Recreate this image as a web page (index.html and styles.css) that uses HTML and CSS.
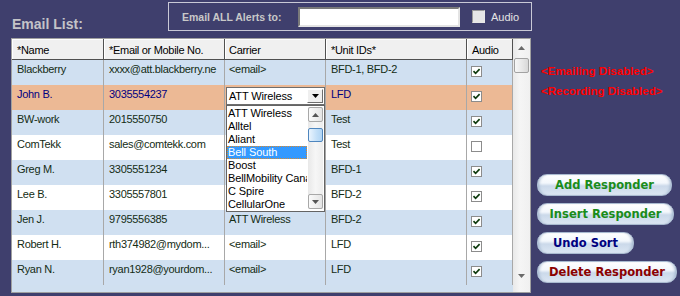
FILE: index.html
```html
<!DOCTYPE html>
<html>
<head>
<meta charset="utf-8">
<link rel="stylesheet" href="styles.css">
</head>
<body>
<div class="page">
  <div class="top">
    <div class="list-title">Email List:</div>
    <div class="alert-box">
      <span class="alert-label">Email ALL Alerts to:</span>
      <span class="alert-input"></span>
      <span class="cb-top"></span>
      <span class="alert-audio">Audio</span>
    </div>
  </div>
  <div class="main">
    <div class="frame">
      <div class="grid">
        <div class="row head">
          <div class="c c1">*Name</div>
          <div class="c c2">*Email or Mobile No.</div>
          <div class="c c3">Carrier</div>
          <div class="c c4">*Unit IDs*</div>
          <div class="c c5">Audio</div>
        </div>
        <div class="row alt">
          <div class="c c1">Blackberry</div>
          <div class="c c2">xxxx@att.blackberry.ne</div>
          <div class="c c3">&lt;email&gt;</div>
          <div class="c c4">BFD-1, BFD-2</div>
          <div class="c c5 ca"><span class="cb on"><svg viewBox="0 0 9 9"><path d="M1.5 4.2 L3.6 6.3 L7.6 2.2"/></svg></span></div>
        </div>
        <div class="row sel">
          <div class="c c1">John B.</div>
          <div class="c c2">3035554237</div>
          <div class="c c3 cc">
            <div class="combo">ATT Wireless<span class="combo-btn"><svg viewBox="0 0 7 4"><path d="M0 0 H7 L3.5 4 Z"/></svg></span></div>
          </div>
          <div class="c c4">LFD</div>
          <div class="c c5 ca"><span class="cb on"><svg viewBox="0 0 9 9"><path d="M1.5 4.2 L3.6 6.3 L7.6 2.2"/></svg></span></div>
        </div>
        <div class="row alt">
          <div class="c c1">BW-work</div>
          <div class="c c2">2015550750</div>
          <div class="c c3"></div>
          <div class="c c4">Test</div>
          <div class="c c5 ca"><span class="cb on"><svg viewBox="0 0 9 9"><path d="M1.5 4.2 L3.6 6.3 L7.6 2.2"/></svg></span></div>
        </div>
        <div class="row">
          <div class="c c1">ComTekk</div>
          <div class="c c2">sales@comtekk.com</div>
          <div class="c c3"></div>
          <div class="c c4">Test</div>
          <div class="c c5 ca"><span class="cb"></span></div>
        </div>
        <div class="row alt">
          <div class="c c1">Greg M.</div>
          <div class="c c2">3305551234</div>
          <div class="c c3"></div>
          <div class="c c4">BFD-1</div>
          <div class="c c5 ca"><span class="cb on"><svg viewBox="0 0 9 9"><path d="M1.5 4.2 L3.6 6.3 L7.6 2.2"/></svg></span></div>
        </div>
        <div class="row">
          <div class="c c1">Lee B.</div>
          <div class="c c2">3305557801</div>
          <div class="c c3"></div>
          <div class="c c4">BFD-2</div>
          <div class="c c5 ca"><span class="cb on"><svg viewBox="0 0 9 9"><path d="M1.5 4.2 L3.6 6.3 L7.6 2.2"/></svg></span></div>
        </div>
        <div class="row alt">
          <div class="c c1">Jen J.</div>
          <div class="c c2">9795556385</div>
          <div class="c c3">ATT Wireless</div>
          <div class="c c4">BFD-2</div>
          <div class="c c5 ca"><span class="cb on"><svg viewBox="0 0 9 9"><path d="M1.5 4.2 L3.6 6.3 L7.6 2.2"/></svg></span></div>
        </div>
        <div class="row">
          <div class="c c1">Robert H.</div>
          <div class="c c2">rth374982@mydom...</div>
          <div class="c c3">&lt;email&gt;</div>
          <div class="c c4">LFD</div>
          <div class="c c5 ca"><span class="cb on"><svg viewBox="0 0 9 9"><path d="M1.5 4.2 L3.6 6.3 L7.6 2.2"/></svg></span></div>
        </div>
        <div class="row alt">
          <div class="c c1">Ryan N.</div>
          <div class="c c2">ryan1928@yourdom...</div>
          <div class="c c3">&lt;email&gt;</div>
          <div class="c c4">LFD</div>
          <div class="c c5 ca"><span class="cb on"><svg viewBox="0 0 9 9"><path d="M1.5 4.2 L3.6 6.3 L7.6 2.2"/></svg></span></div>
        </div>
      </div>
      <div class="vscroll">
        <span class="arrow up"><svg viewBox="0 0 7 4"><path d="M3.5 0 L7 4 H0 Z"/></svg></span>
        <span class="thumb"></span>
        <span class="arrow down"><svg viewBox="0 0 7 4"><path d="M0 0 H7 L3.5 4 Z"/></svg></span>
      </div>
      <div class="droplist">
        <div class="items">
          <div class="it">ATT Wireless</div>
          <div class="it">Alltel</div>
          <div class="it">Aliant</div>
          <div class="it on">Bell South</div>
          <div class="it">Boost</div>
          <div class="it">BellMobility Cana</div>
          <div class="it">C Spire</div>
          <div class="it">CellularOne</div>
        </div>
        <div class="lscroll">
          <span class="lbtn"><svg viewBox="0 0 7 4"><path d="M3.5 0 L7 4 H0 Z"/></svg></span>
          <span class="lthumb"></span>
          <span class="lbtn lbtn-down"><svg viewBox="0 0 7 4"><path d="M0 0 H7 L3.5 4 Z"/></svg></span>
        </div>
      </div>
    </div>
    <div class="side">
      <div class="warn">&lt;Emailing Disabled&gt;</div>
      <div class="warn">&lt;Recording Disabled&gt;</div>
      <div class="buttons">
        <div class="btn btn-add">Add Responder</div>
        <div class="btn btn-insert">Insert Responder</div>
        <div class="btn btn-undo">Undo Sort</div>
        <div class="btn btn-delete">Delete Responder</div>
      </div>
    </div>
  </div>
</div>
</body>
</html>
```

FILE: styles.css
```css
html, body {
  margin: 0;
  padding: 0;
}
body {
  background: #3f3f6d;
  width: 680px;
  height: 296px;
  overflow: hidden;
  font-family: "Liberation Sans", Arial, sans-serif;
}
.top {
  display: flex;
  padding-top: 2px;
  height: 29px;
}
.list-title {
  flex: 0 0 168px;
  box-sizing: border-box;
  padding-left: 12px;
  margin-top: 15px;
  font-size: 14px;
  font-weight: bold;
  line-height: 14px;
  color: #c4c4c8;
}
.alert-box {
  box-sizing: border-box;
  width: 364px;
  height: 29px;
  border: 1px solid #c9c9d6;
  display: flex;
  align-items: center;
  padding-left: 13px;
}
.alert-label {
  flex: 0 0 116px;
  font-size: 10.5px;
  font-weight: bold;
  color: #c8c8c8;
}
.alert-input {
  box-sizing: border-box;
  width: 162px;
  height: 20px;
  background: #fff;
  border: 2px solid;
  border-color: #7a7a7a #e4e4e4 #e4e4e4 #7a7a7a;
}
.cb-top {
  box-sizing: border-box;
  width: 13px;
  height: 13px;
  margin-left: 12px;
  background: #e6e6e6;
  border: 1px solid #9a9a9a;
  border-right-color: #e8e8e8;
  border-bottom-color: #e8e8e8;
}
.alert-audio {
  margin-left: 6px;
  font-size: 11px;
  color: #e4e4e4;
}
.main {
  display: flex;
  margin-top: 7px;
}
.frame {
  position: relative;
  box-sizing: border-box;
  width: 520px;
  height: 255px;
  margin-left: 11px;
  border: 1px solid #a0a0a0;
  display: flex;
  background: #d0e0f0;
}
.grid {
  width: 501px;
}
.row {
  display: flex;
  height: 25px;
  background: #fff;
}
.row.alt {
  background: #d0e0f1;
}
.row.sel {
  background: #ecb995;
}
.row.sel .c {
  color: #000080;
}
.c {
  box-sizing: border-box;
  height: 100%;
  border-right: 1px solid #a8a8a8;
  padding: 3px 0 0 5px;
  white-space: nowrap;
  overflow: hidden;
  font-size: 11px;
  line-height: 13px;
  letter-spacing: -0.3px;
  color: #142c14;
}
.c1 { width: 92px; }
.c2 { width: 121px; }
.c3 { width: 101px; padding-left: 4px; }
.c4 { width: 141px; }
.c5 { width: 46px; }
.row.head {
  height: 21px;
  background: #f0f0f0;
}
.row.head .c {
  color: #000;
  padding-top: 5px;
  border-right: 1px solid #505050;
  border-bottom: 1px solid #505050;
  box-shadow: inset 1px 1px 0 #fff;
}
.ca {
  padding: 6px 0 0 4px;
}
.cb {
  display: block;
  box-sizing: border-box;
  width: 11px;
  height: 11px;
  border: 1px solid #8c8c8c;
  background: #fff;
}
.cb svg {
  display: block;
  width: 9px;
  height: 9px;
}
.cb svg path {
  fill: none;
  stroke: #0d3a0d;
  stroke-width: 1.7;
}
.c.cc {
  padding: 2px 0 0 1px;
  overflow: visible;
}
.combo {
  position: relative;
  box-sizing: border-box;
  width: 99px;
  height: 18px;
  border: 1px solid #6e6e6e;
  background: #fff;
  padding: 1px 0 0 2px;
  color: #000;
  letter-spacing: -0.15px;
  font-size: 11px;
  line-height: 14px;
}
.combo-btn {
  position: absolute;
  right: 1px;
  top: 1px;
  box-sizing: border-box;
  width: 16px;
  height: 14px;
  background: #efefef;
  border: 1px solid;
  border-color: #fff #6e6e6e #6e6e6e #fff;
  display: flex;
  align-items: center;
  justify-content: center;
}
.combo-btn svg {
  width: 7px;
  height: 4px;
  fill: #000;
}
.vscroll {
  width: 17px;
  background: linear-gradient(to right, #e9e9e9, #f5f5f5 40%, #f0f0f0);
  display: flex;
  flex-direction: column;
  align-items: center;
}
.arrow {
  display: flex;
  align-items: center;
  justify-content: center;
  height: 18px;
  width: 15px;
}
.arrow svg {
  width: 7px;
  height: 4px;
  fill: #6a6a6a;
}
.arrow.down {
  margin-top: auto;
  height: 20px;
  margin-bottom: 6px;
}
.thumb {
  box-sizing: border-box;
  width: 15px;
  height: 15px;
  margin-top: 1px;
  border: 1px solid #a2a2a2;
  border-radius: 2px;
  background: linear-gradient(to right, #f7f7f7, #e6e6e6 60%, #d8d8d8);
}
.droplist {
  position: absolute;
  left: 214px;
  top: 66px;
  box-sizing: border-box;
  width: 99px;
  height: 107px;
  border: 1px solid #646464;
  background: #fff;
  padding-top: 1px;
  display: flex;
}
.items {
  width: 80px;
  overflow: hidden;
}
.it {
  height: 13px;
  line-height: 13px;
  padding-left: 1px;
  font-size: 11px;
  white-space: nowrap;
  overflow: hidden;
  color: #000;
  letter-spacing: -0.1px;
}
.it.on {
  background: #3399ff;
  color: #fff;
  outline: 1px dotted #d9892e;
  outline-offset: -1px;
}
.lscroll {
  width: 15px;
  height: 102px;
  margin-left: 1px;
  background: linear-gradient(to right, #e8e8e8, #f6f6f6 50%, #ededed);
  display: flex;
  flex-direction: column;
}
.lbtn {
  box-sizing: border-box;
  height: 15px;
  border: 1px solid #a8a8a8;
  border-radius: 2px;
  background: linear-gradient(to right, #fafafa, #e4e4e4);
  display: flex;
  align-items: center;
  justify-content: center;
}
.lbtn svg {
  width: 7px;
  height: 4px;
  fill: #555;
}
.lbtn-down {
  margin-top: auto;
}
.lthumb {
  box-sizing: border-box;
  height: 14px;
  margin-top: 6px;
  border: 1px solid #4f86be;
  border-radius: 2px;
  background: linear-gradient(to right, #eaf4fe, #c2dff8 60%, #b0d4f4);
}
.side {
  flex: 1;
  padding: 23px 0 0 6px;
}
.warn {
  margin-left: 4px;
  font-size: 11.5px;
  font-weight: bold;
  line-height: 20px;
  color: #ff0000;
}
.buttons {
  margin-top: 73px;
  display: flex;
  flex-direction: column;
  gap: 7px;
  align-items: flex-start;
}
.btn {
  box-sizing: border-box;
  height: 22px;
  border: 1px solid #a9bad0;
  border-radius: 10px;
  background: linear-gradient(to bottom, #ffffff 0%, #f3f7fc 40%, #cbd9ea 55%, #dbe6f3 100%);
  box-shadow: inset 3px 0 3px -2px #9fb3cc, inset -3px 0 3px -2px #9fb3cc;
  font-family: "DejaVu Sans", Verdana, sans-serif;
  font-size: 11.5px;
  font-weight: bold;
  line-height: 20px;
  text-align: center;
  white-space: nowrap;
}
.btn-add { width: 135px; color: #1a8c1a; }
.btn-insert { width: 137px; color: #1a8c1a; }
.btn-undo { width: 97px; color: #00007f; }
.btn-delete { width: 140px; color: #8b0000; }
```
